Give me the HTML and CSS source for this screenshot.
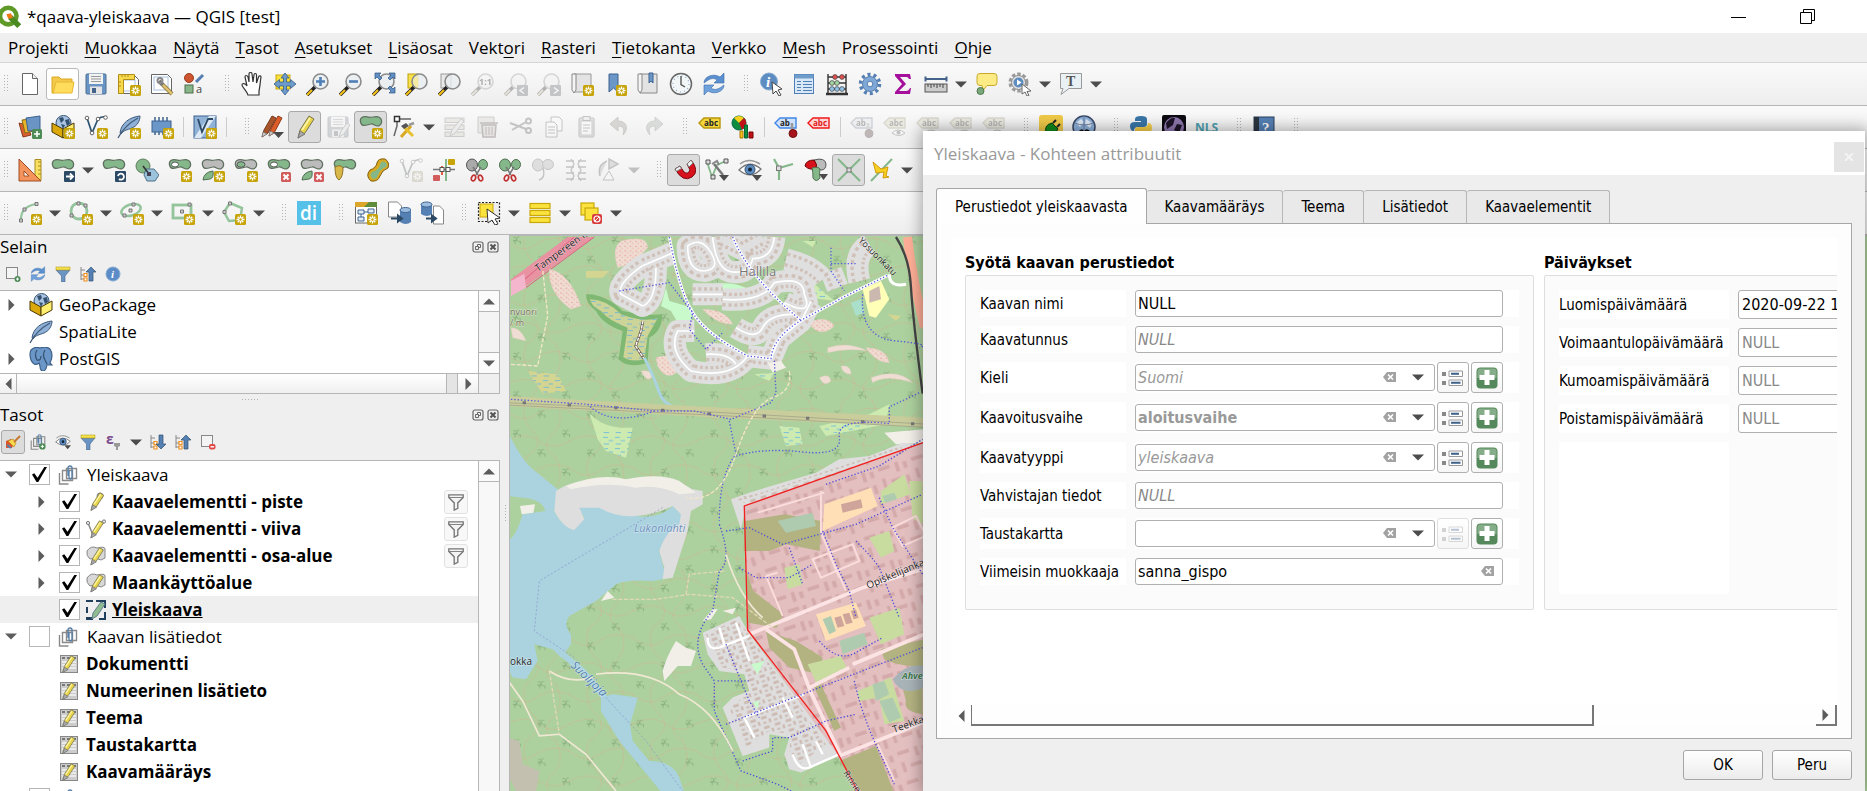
FILE: index.html
```
<!DOCTYPE html>
<html lang="fi">
<head>
<meta charset="utf-8">
<title>*qaava-yleiskaava — QGIS [test]</title>
<link rel="stylesheet" href="styles.css">
</head>
<body>
<svg class="sprite" aria-hidden="true">
<defs>
<g id="star"><rect x="13" y="13" width="11" height="11" rx="1.5" fill="#c6a40a"/><path d="M18.500 14.500v8M14.500 18.500h8M15.700 15.700l5.600 5.600M21.300 15.700l-5.600 5.600" stroke="#fff" stroke-width="1.300"/><circle cx="18.500" cy="18.500" r="1.200" fill="#c6a40a"/></g>
<g id="redx"><rect x="14" y="14" width="10" height="10" rx="1.500" fill="#d25c5c"/><path d="M16.500 16.500l5 5M21.500 16.500l-5 5" stroke="#fff" stroke-width="2"/></g>
<path id="blob" d="M1.500 7C.5 3 4 1 8 1.800 12 3.500 15 1 19 1.800 23 3 24 8 20.500 10.500 17 12.500 15 8.500 12 9 8 9.500 3 13 1.500 7z" stroke="#5f6f5f" stroke-width="1.200"/>
<g id="lens"><path d="M1 23l8-8" stroke="#222" stroke-width="3.500"/><path d="M1 23l5-5" stroke="#f5c21a" stroke-width="2.200"/><circle cx="14.500" cy="9.500" r="7.500" fill="#e9edf0" fill-opacity=".8" stroke="#8b8b8b" stroke-width="1.600"/></g>
<g id="pencil"><path d="M5 23l2-8L16 1l5 3-9 14z" fill="#e8d44a" stroke="#77744f"/><path d="M5 23l2-7 5 3z" fill="#aaa" stroke="#777"/><path d="M9 15l8-12" stroke="#fff8b0" stroke-width="1.500"/></g>
<g id="scissors"><path d="M8 9l5 8M16 9l-5 8" stroke="#777" stroke-width="1.500"/><ellipse cx="8.500" cy="20" rx="2" ry="3" transform="rotate(20 8.500 20)" fill="none" stroke="#c23030" stroke-width="1.700"/><ellipse cx="15.500" cy="20" rx="2" ry="3" transform="rotate(-20 15.500 20)" fill="none" stroke="#c23030" stroke-width="1.700"/></g>
<g id="tag"><path d="M1 8l5-5h16v10H6z" stroke-width="1.400"/></g>
</defs>
<symbol id="i-new" viewBox="0 0 24 24"><path d="M4.500 1.500h10l5 5v16h-15z" fill="#fff" stroke="#666"/><path d="M14.500 1.500v5h5" fill="#eee" stroke="#666"/></symbol>
<symbol id="i-open" viewBox="0 0 24 24"><path d="M1 5h7l2 2h11v4H6L3 21H1z" fill="#f2c94a" stroke="#dba820"/><path d="M5 10h18l-2 11H2z" fill="#ffdc5c" stroke="#e8b832"/></symbol>
<symbol id="i-save" viewBox="0 0 24 24"><rect x="2" y="2" width="20" height="20" rx="1" fill="#6a94c4" stroke="#4c6f96"/><rect x="5" y="2" width="14" height="10" fill="#f2f2f2"/><path d="M7 4.500h10M7 7h10M7 9.500h10" stroke="#999"/><rect x="6" y="14.500" width="12" height="7.500" fill="#e4e4e4"/><rect x="8" y="16" width="4" height="5" fill="#44638a"/></symbol>
<symbol id="i-layout" viewBox="0 0 24 24"><path d="M1.500 3.500h16l4 4v14h-20z" fill="#fff" stroke="#666"/><rect x="6" y="8" width="12" height="11" fill="none" stroke="#a9bfe0"/><path d="M1.500 2.500h16v5h-11v14h-5z" fill="#f8d94c" stroke="#b08e1c"/><path d="M5 3v2M8 3v2M11 3v2M2 10h2M2 14h2" stroke="#b08e1c"/><use href="#star"/></symbol>
<symbol id="i-layoutmgr" viewBox="0 0 24 24"><path d="M1.500 2.500h16l4 4v15h-20z" fill="#fff" stroke="#666"/><rect x="4" y="5" width="14" height="13" fill="none" stroke="#a9bfe0"/><path d="M9 9l4 4" stroke="#777" stroke-width="4"/><circle cx="10" cy="8.500" r="2.500" fill="none" stroke="#888" stroke-width="2"/><path d="M13 13l9 9" stroke="#8a7338" stroke-width="4"/><path d="M13 13l9 9" stroke="#dcc070" stroke-width="2.500"/></symbol>
<symbol id="i-style" viewBox="0 0 24 24"><circle cx="6" cy="6" r="4.500" fill="#cc5630" stroke="#9c3d1c"/><path d="M13 10l7-7" stroke="#557fb2" stroke-width="3"/><rect x="2" y="13" width="8" height="8" fill="#88b688" stroke="#4c6f4c"/><text x="13" y="21" font-size="11" font-family="Open Sans" fill="#444">a</text></symbol>
<symbol id="i-hand" viewBox="0 0 24 24"><path d="M8 23c-1-4-6-8-6-10s3-2 5 1L5 5c0-2 2-2 3 0l1 5V2c0-2 3-2 3 0l1 8 1-7c0-2 2.500-2 2.500 0v8l2-6c.5-2 2.500-1 2.500 0-1 6-1 10-2 14v4z" fill="#fff" stroke="#333" stroke-width="1.200"/></symbol>
<symbol id="i-pan" viewBox="0 0 24 24"><rect x="3" y="3" width="14" height="14" fill="#fbe23c" stroke="#c9a80c"/><path d="M12 1l4 5h-2.500v4h4V7.500l5.500 4.500-5.500 4.500V14h-4v4H16l-4 5-4-5h2.500v-4h-4v2.500L1 12l5.500-4.500V10h4V6H8z" fill="#6d9bcb" stroke="#355a85" stroke-width=".8"/></symbol>
<symbol id="i-zin" viewBox="0 0 24 24"><use href="#lens"/><path d="M14.500 5v9M10 9.500h9" stroke="#4f7fb5" stroke-width="2.600"/></symbol>
<symbol id="i-zout" viewBox="0 0 24 24"><use href="#lens"/><path d="M10 9.500h9" stroke="#4f7fb5" stroke-width="2.600"/></symbol>
<symbol id="i-zfull" viewBox="0 0 24 24"><use href="#lens"/><path d="M3 1h6L7 3l3 3-2 2-3-3-2 2zM23 1v6l-2-2-3 3-2-2 3-3-2-2zM23 21h-6l2-2-3-3 2-2 3 3 2-2z" fill="#5f8fc4" stroke="#2f5580" stroke-width=".7"/></symbol>
<symbol id="i-zsel" viewBox="0 0 24 24"><rect x="3" y="2" width="10" height="14" fill="#f8e14a" stroke="#bfa00c"/><use href="#lens"/><path d="M13 4.500v11a6 6 0 0 1-3-10z" fill="#f4e9a0"/></symbol>
<symbol id="i-zlay" viewBox="0 0 24 24"><rect x="3" y="2" width="10" height="14" fill="#e8e8e8" stroke="#999"/><use href="#lens"/></symbol>
<symbol id="i-znat" viewBox="0 0 24 24"><use href="#lens"/><text x="8" y="13" font-size="9" font-weight="700" font-family="Open Sans">1:1</text></symbol>
<symbol id="i-zlast" viewBox="0 0 24 24"><use href="#lens"/><rect x="13" y="13" width="11" height="11" rx="1" fill="#4b6078"/><path d="M20 15.500l-4 3 4 3" fill="none" stroke="#fff" stroke-width="1.500"/></symbol>
<symbol id="i-znext" viewBox="0 0 24 24"><use href="#lens"/><rect x="13" y="13" width="11" height="11" rx="1" fill="#4b6078"/><path d="M17 15.500l4 3-4 3" fill="none" stroke="#fff" stroke-width="1.500"/></symbol>
<symbol id="i-newmap" viewBox="0 0 24 24"><path d="M4 2h17v18H4z" fill="#e3e3e3" stroke="#999"/><path d="M2 2h4v16l-2 3-2-3z" fill="#f4f4f4" stroke="#888"/><use href="#star"/></symbol>
<symbol id="i-bookmark" viewBox="0 0 24 24"><path d="M6 2h9v18l-4.500-4L6 20z" fill="#6a96c8" stroke="#3d638f"/><use href="#star"/></symbol>
<symbol id="i-bookmarks" viewBox="0 0 24 24"><path d="M4 2h17v19H4z" fill="#e3e3e3" stroke="#888"/><path d="M2 2h4v16l-2 3-2-3z" fill="#f4f4f4" stroke="#888"/><path d="M13 1h4v10l-2-2-2 2z" fill="#6a96c8" stroke="#3d638f"/></symbol>
<symbol id="i-clock" viewBox="0 0 24 24"><circle cx="12" cy="12" r="10.500" fill="#f4f7f8" stroke="#666" stroke-width="1.500"/><circle cx="12" cy="12" r="8" fill="none" stroke="#88aacc" stroke-width="1.200" stroke-dasharray="1 3.200"/><path d="M12 4v8.500l4 2.500" fill="none" stroke="#555" stroke-width="1.400"/></symbol>
<symbol id="i-refresh" viewBox="0 0 24 24"><path d="M2 11C2 4 12 1 18 5l4-4v10H12l3-3c-4-3-8-1-13 3z" fill="#5b90d0" stroke="#3b6ca8" stroke-width=".6"/><path d="M22 13c0 7-10 10-16 6l-4 4V13h10l-3 3c4 3 8 1 13-3z" fill="#6fa1dc" stroke="#3b6ca8" stroke-width=".6"/></symbol>
<symbol id="i-identify" viewBox="0 0 24 24"><circle cx="10" cy="9.500" r="8.500" fill="#5c8cc0" stroke="#86abd2"/><text x="7" y="15" font-size="15" font-style="italic" font-weight="700" font-family="Liberation Serif" fill="#fff">i</text><path d="M13 10l10 7-4 1 3 5-2 1-3-5-3 3z" fill="#fff" stroke="#444"/></symbol>
<symbol id="i-table" viewBox="0 0 24 24"><rect x="2.500" y="2.500" width="19" height="19" fill="#d8e8f6" stroke="#4f7fb5"/><rect x="2.500" y="2.500" width="19" height="4" fill="#6e9dcc"/><path d="M5 9.500h4M11 9.500h9M5 12.500h4M11 12.500h9M5 15.500h4M11 15.500h9M5 18.500h4M11 18.500h9" stroke="#4f7fb5"/></symbol>
<symbol id="i-abacus" viewBox="0 0 24 24"><path d="M3 2v19M21 2v19M3 5h18M3 11h18M3 17h18" stroke="#333" stroke-width="1.400"/><path d="M1 22h22" stroke="#333" stroke-width="2.500"/><g stroke="#444" stroke-width=".7"><g fill="#e05050"><circle cx="10" cy="5" r="2.400"/><circle cx="17" cy="5" r="2.400"/></g><g fill="#a3d8a3"><circle cx="7" cy="11" r="2.400"/><circle cx="12" cy="11" r="2.400"/></g><g fill="#8fc4e8"><circle cx="7" cy="17" r="2.400"/><circle cx="12" cy="17" r="2.400"/><circle cx="17" cy="17" r="2.400"/></g></g></symbol>
<symbol id="i-gear" viewBox="0 0 24 24"><circle cx="12" cy="12" r="9.500" fill="none" stroke="#557fb2" stroke-width="3.500" stroke-dasharray="3 3"/><circle cx="12" cy="12" r="7.500" fill="#7fa8d6" stroke="#557fb2"/><circle cx="12" cy="12" r="2.800" fill="#f4f4f4" stroke="#557fb2"/></symbol>
<symbol id="i-sigma" viewBox="0 0 24 24"><path d="M4 2h15l1 5h-2c-1-2-2-2-4-2H9l6 7-7 7h7c2 0 3-1 4-3h1l-1 6H4v-2l7-8-7-8z" fill="#a4109c"/></symbol>
<symbol id="i-ruler" viewBox="0 0 24 24"><path d="M1 7h22M1.500 4.500v5M22.500 4.500v5" stroke="#44638a" stroke-width="2"/><rect x="1" y="12" width="22" height="8" fill="#ccc" stroke="#555"/><path d="M4 12v3M7 12v4M10 12v3M13 12v4M16 12v3M19 12v4" stroke="#444"/></symbol>
<symbol id="i-tip" viewBox="0 0 24 24"><path d="M5 1.500h14q3 0 3 3v6q0 3-3 3h-7l-4 5-1-5H5q-3 0-3-3v-6q0-3 3-3z" fill="#fdec86" stroke="#c9a92c"/><circle cx="5.500" cy="19" r="3.500" fill="#7aa87a" stroke="#4d7a4d"/></symbol>
<symbol id="i-action" viewBox="0 0 24 24"><circle cx="10.500" cy="10.500" r="8.500" fill="none" stroke="#999" stroke-width="3" stroke-dasharray="3.500 2"/><circle cx="10.500" cy="10.500" r="7" fill="#e2e2e2" stroke="#888"/><circle cx="10.500" cy="10.500" r="5" fill="#5c8cc0"/><path d="M9 7.500l4.500 3-4.500 3z" fill="#fff"/><path d="M14 12l9 7-4 .5 2 4-2 .5-2-4-3 2z" fill="#fff" stroke="#666"/></symbol>
<symbol id="i-text" viewBox="0 0 24 24"><path d="M1.500 1.500h21v15H10l-8 6 2-6H1.500z" fill="#e9f1f4" stroke="#999"/><text x="7" y="14" font-size="14" font-weight="700" font-family="Liberation Serif" fill="#555">T</text></symbol>
<symbol id="i-dsm" viewBox="0 0 24 24"><path d="M1 8l8 2 4 10-8 2z" fill="#d86030" stroke="#8a3c1a"/><path d="M4 5l9-1 3 12-9 2z" fill="#e8b42a" stroke="#8a6a10"/><path d="M8 3l14-2v14l-12 1z" fill="#6a94c4" stroke="#3d638f"/><rect x="14" y="14" width="10" height="10" rx="1.500" fill="#4d8c57"/><path d="M19 16v6M16 19h6" stroke="#fff" stroke-width="1.600"/></symbol>
<symbol id="i-gpkg" viewBox="0 0 24 24"><circle cx="12.500" cy="8" r="7.500" fill="#a8c4e2" stroke="#34506f"/><path d="M8 3l4-1 1 3-3 3zM14 5l4-1 1 5-3 2zM10 9l4 1-2 4z" fill="#34506f"/><path d="M1 8l11 6v9L1 17z" fill="#dca90c" stroke="#4a3a04"/><path d="M23 8l-11 6v9l11-6z" fill="#ffee70" stroke="#4a3a04"/></symbol>
<symbol id="i-gpkgnew" viewBox="0 0 24 24"><use href="#i-gpkg"/><use href="#star"/></symbol>
<symbol id="i-vnode" viewBox="0 0 24 24"><path d="M3 3l5 15L14 4q4-3 8-2" fill="none" stroke="#2c5470" stroke-width="1.700"/><g fill="#fff" stroke="#555" stroke-width=".9"><circle cx="3" cy="3" r="1.800"/><circle cx="14" cy="4" r="1.800"/><circle cx="21.500" cy="2.500" r="1.800"/><circle cx="8" cy="18" r="1.800"/></g></symbol>
<symbol id="i-vnew" viewBox="0 0 24 24"><use href="#i-vnode"/><use href="#star"/></symbol>
<symbol id="i-feather" viewBox="0 0 24 24"><path d="M3 18C4 8 13 2 23 1c0 5-3 10-8 12s-8 2-11 6z" fill="#8fb0d6" stroke="#3d5878"/><path d="M1 23C5 15 12 8 21 3" fill="none" stroke="#3d5878" stroke-width="1.200"/></symbol>
<symbol id="i-feathernew" viewBox="0 0 24 24"><use href="#i-feather"/><use href="#star"/></symbol>
<symbol id="i-chip" viewBox="0 0 24 24"><path d="M5 2v18M9 2v18M13 2v18M17 2v18" stroke="#3d638f" stroke-width="1.500"/><rect x="2" y="6" width="19" height="11" fill="#6a96c8" stroke="#3d638f"/><use href="#star"/></symbol>
<symbol id="i-vbox" viewBox="0 0 24 24"><rect x="1" y="1" width="22" height="22" fill="#8fb2d6" stroke="#3d638f"/><path d="M1 23L16 1h7L8 23z" fill="#dce8f3"/><path d="M5 4l4 13L15 4h5" fill="none" stroke="#2c4a66" stroke-width="1.800"/><use href="#star"/></symbol>
<symbol id="i-pencils" viewBox="0 0 24 24"><path d="M2 22l2-7L12 1l4 2-8 15z" fill="#a8542a" stroke="#73391a"/><path d="M9 21l2-7L18 1l4 2-8 15z" fill="#de5c28" stroke="#8f3a18"/><path d="M2 22l1-5 4 2zM9 21l1-5 4 2z" fill="#ccc" stroke="#777" stroke-width=".7"/><path d="M13 17h11l-5.500 6z" fill="#4a4a4a"/></symbol>
<symbol id="i-pencil" viewBox="0 0 24 24"><use href="#pencil"/></symbol>
<symbol id="i-saveedit" viewBox="0 0 24 24"><use href="#i-save"/><path d="M13 22l2-6 6-8 3 2-6 9z" fill="#ddd" stroke="#777"/></symbol>
<symbol id="i-addpoly" viewBox="0 0 24 24"><use href="#blob" fill="#84b88a"/><use href="#star"/></symbol>
<symbol id="i-nodetool" viewBox="0 0 24 24"><path d="M5 4v7L2 21M5 4h14" stroke="#666" stroke-width="1.500" fill="none"/><rect x="2.500" y="1.500" width="5" height="5" fill="#fff" stroke="#333" stroke-width="1.500"/><path d="M9 22l10-11" stroke="#d8a820" stroke-width="3"/><path d="M12 12l9 9" stroke="#e8c030" stroke-width="3"/><path d="M9 11l5-3 3 3-5 3z" fill="#555"/><path d="M17 10l5-2" stroke="#999" stroke-width="2.500"/></symbol>
<symbol id="i-multi" viewBox="0 0 24 24"><rect x="2" y="3" width="19" height="4.500" fill="#d8cf90" stroke="#777"/><rect x="2" y="10" width="19" height="4.500" fill="#d8cf90" stroke="#777"/><rect x="2" y="17" width="19" height="4.500" fill="#d8cf90" stroke="#777"/><path d="M7 21l2-6 9-11 3 2-9 12z" fill="#ddd" stroke="#777"/></symbol>
<symbol id="i-trash" viewBox="0 0 24 24"><path d="M2 2h16v16H2z" fill="#d8cf90" stroke="#777"/><path d="M4 8h18M6 10h14l-1 12H7z" fill="#e6b8b0" stroke="#833" stroke-width="1.500"/><path d="M10 12v8M13 12v8M16 12v8" stroke="#833"/></symbol>
<symbol id="i-cut" viewBox="0 0 24 24"><path d="M1 8l16 6M3 15L17 7" stroke="#555" stroke-width="2"/><circle cx="19.500" cy="6" r="2.500" fill="none" stroke="#555" stroke-width="2"/><circle cx="19.500" cy="15.500" r="2.500" fill="none" stroke="#555" stroke-width="2"/></symbol>
<symbol id="i-copy" viewBox="0 0 24 24"><path d="M9 2h8l3 3v11H9z" fill="#fff" stroke="#555"/><path d="M4 7h8l3 3v12H4z" fill="#fff" stroke="#555"/><path d="M6 12h7M6 15h7M6 18h7" stroke="#555"/></symbol>
<symbol id="i-paste" viewBox="0 0 24 24"><rect x="4" y="3" width="15" height="19" rx="1" fill="#bbb" stroke="#555"/><rect x="6" y="6" width="11" height="14" fill="#fff" stroke="#777"/><rect x="8" y="1.500" width="7" height="4" fill="#ddd" stroke="#555"/><path d="M8 10h7M8 13h7M8 16h5" stroke="#555"/></symbol>
<symbol id="i-undo" viewBox="0 0 24 24"><path d="M2 9l8-7v4c9 0 11 8 5 14 2-6 0-9-5-9v5z" fill="#b08a5c" stroke="#8a6a40"/></symbol>
<symbol id="i-redo" viewBox="0 0 24 24"><path d="M22 9l-8-7v4c-9 0-11 8-5 14-2-6 0-9 5-9v5z" fill="#8aa890" stroke="#6a8870"/></symbol>
<symbol id="i-abc" viewBox="0 0 24 24"><use href="#tag" fill="#f4d63c" stroke="#b8960c"/><text x="6" y="11" font-size="8" font-weight="700" font-family="Open Sans" fill="#222">abc</text></symbol>
<symbol id="i-abcblue" viewBox="0 0 24 24"><use href="#tag" fill="#cfe2fb" stroke="#3f86e8"/><text x="6" y="11" font-size="8" font-weight="700" font-family="Open Sans" fill="#222">ab</text><path d="M18 8v8" stroke="#999" stroke-width="2.500"/><circle cx="19" cy="18.500" r="4" fill="#a8141c" stroke="#701014"/></symbol>
<symbol id="i-abcred" viewBox="0 0 24 24"><use href="#tag" fill="#ffd6d6" stroke="#f01818"/><text x="6" y="11" font-size="8" font-weight="700" font-family="Open Sans" fill="#e01818">abc</text></symbol>
<symbol id="i-abceye" viewBox="0 0 24 24"><use href="#i-abc"/><path d="M9 18q6-6 13 0-6 5-13 0z" fill="#fff" stroke="#555"/><circle cx="15.500" cy="17.500" r="2" fill="#555"/></symbol>
<symbol id="i-diagram" viewBox="0 0 24 24"><circle cx="8" cy="8" r="7" fill="#108c40" stroke="#064"/><path d="M8 8L3 3a7 7 0 0 1 10 0z" fill="#f8d020"/><path d="M8 8l5-5a7 7 0 0 1-2 11.500z" fill="#c01018"/><path d="M9 16h3v7H9z" fill="#f8c020" stroke="#a70"/><path d="M13.500 10h3v13h-3z" fill="#108c40" stroke="#063"/><path d="M18 17h4v6h-4z" fill="#c01018" stroke="#700"/></symbol>
<symbol id="i-plug" viewBox="0 0 24 24"><rect width="24" height="24" rx="3" fill="#efc948"/><path d="M7 17q-2-7 6-9l6 6q-3 6-10 6z" fill="#118a1c" stroke="#063c0a"/><path d="M14 8l3-3M18 12l3-3M7 18l-4 4" stroke="#222" stroke-width="2"/></symbol>
<symbol id="i-globe" viewBox="0 0 24 24"><circle cx="12" cy="12" r="11" fill="#8fb2dc" stroke="#3a4a66" stroke-width="1.500"/><path d="M4 8l5-4 3 3-4 5zM14 4l6 4-2 5-5-4z" fill="#dfe9f5"/><path d="M3 8q9 4 18 0M12 1v14" stroke="#6a7fa0" fill="none"/><path d="M6 17q4-5 6-1 3-4 7 1-4 4-7 0-3 4-6 0z" fill="#111"/></symbol>
<symbol id="i-python" viewBox="0 0 24 24"><path d="M6 7V4q0-3 6-3t6 3v5q0 3-3 3H9q-4 0-4 4-4 0-4-5 0-4 5-4h6V6H6z" fill="#3a76a8"/><path d="M18 16v4q0 3-6 3t-6-3v-5q0-3 3-3h6q4 0 4-4 4 0 4 5t-5 4z" fill="#f8cf48"/></symbol>
<symbol id="i-dark" viewBox="0 0 24 24"><rect width="24" height="24" rx="2" fill="#0d0a12"/><circle cx="12" cy="12" r="10" fill="#8d76ad"/><path d="M4 8q5-6 9-5l-2 7-6 4zM15 9l5 1-3 8-5-3z" fill="#1d1428"/></symbol>
<symbol id="i-help" viewBox="0 0 24 24"><rect x="2" y="2" width="20" height="22" fill="#5580b4" stroke="#2a3f5a"/><rect x="2" y="2" width="5" height="22" fill="#2a3440"/><text x="10" y="18" font-size="15" font-weight="700" font-family="Liberation Serif" fill="#fff">?</text></symbol>
<symbol id="i-triangle" viewBox="0 0 24 24"><path d="M17 1.500h6v21h-6z" fill="#f8e060" stroke="#a88c20"/><path d="M20 4h3M20 8h3M20 12h3M20 16h3" stroke="#a88c20"/><path d="M1 1l22 22H1z" fill="#f4935c" stroke="#a04c20"/><path d="M6 13l5 5H6z" fill="#fff" stroke="#a04c20"/></symbol>
<symbol id="i-move" viewBox="0 0 24 24"><use href="#blob" fill="#84b88a"/><rect x="13" y="13" width="11" height="11" rx="1" fill="#2c4a66"/><path d="M15 18.500h6M19 15.500l3 3-3 3" stroke="#fff" stroke-width="1.800" fill="none"/></symbol>
<symbol id="i-rotate" viewBox="0 0 24 24"><use href="#blob" fill="#84b88a"/><rect x="13" y="13" width="11" height="11" rx="1" fill="#2c4a66"/><path d="M17 21a3 3 0 1 0-1-3" stroke="#fff" stroke-width="1.800" fill="none"/></symbol>
<symbol id="i-simplify" viewBox="0 0 24 24"><circle cx="8" cy="8" r="7" fill="#84b88a" stroke="#5f7f5f"/><path d="M11 11h8l5 6-4 6h-8l-3-6z" fill="#9bc4dc" stroke="#4c7088"/><path d="M8 8l6 8" stroke="#333" stroke-width="1.500"/><path d="M12 14h4v4h-4z" fill="#445"/></symbol>
<symbol id="i-ring" viewBox="0 0 24 24"><use href="#blob" fill="#84b88a"/><ellipse cx="7" cy="6.500" rx="3.500" ry="2.500" fill="#fff" stroke="#555"/><use href="#star"/></symbol>
<symbol id="i-part" viewBox="0 0 24 24"><use href="#blob" fill="#bbb"/><path d="M2 22q1-8 10-9 1 7-3 8z" fill="#84b88a" stroke="#4f6f4f"/><use href="#star"/></symbol>
<symbol id="i-fillring" viewBox="0 0 24 24"><use href="#blob" fill="#bbb"/><ellipse cx="7" cy="6.500" rx="4" ry="2.800" fill="#84b88a" stroke="#555"/><use href="#star"/></symbol>
<symbol id="i-delring" viewBox="0 0 24 24"><use href="#blob" fill="#84b88a"/><ellipse cx="7" cy="6.500" rx="3.500" ry="2.500" fill="#fff" stroke="#555"/><use href="#redx"/></symbol>
<symbol id="i-delpart" viewBox="0 0 24 24"><use href="#blob" fill="#bbb"/><path d="M2 22q1-8 10-9 1 7-3 8z" fill="#84b88a" stroke="#4f6f4f"/><use href="#redx"/></symbol>
<symbol id="i-reshape" viewBox="0 0 24 24"><use href="#blob" fill="#84b88a"/><path d="M2 9q6-3 8 1 0 9-4 12Q2 20 2 9z" fill="#d8b84a" stroke="#907020"/></symbol>
<symbol id="i-offset" viewBox="0 0 24 24"><path d="M4 12Q10 10 11 5t8-4q5 3 3 9-6 2-8 8t-9 5q-6-5-1-11z" fill="#d8a820" stroke="#806010"/><path d="M6 14q7-2 8-7t5-3q3 2 1 5-6 2-8 8t-6 3q-3-3 0-6z" fill="#84b88a"/></symbol>
<symbol id="i-split" viewBox="0 0 24 24"><ellipse cx="7" cy="7" rx="5.500" ry="6" fill="#aaa" stroke="#555"/><ellipse cx="18" cy="6.500" rx="4.500" ry="5" fill="#84b88a" stroke="#4f6f4f"/><use href="#scissors"/></symbol>
<symbol id="i-splitg" viewBox="0 0 24 24"><ellipse cx="7" cy="7" rx="5.500" ry="6" fill="#84b88a" stroke="#4f6f4f"/><ellipse cx="18" cy="6.500" rx="4.500" ry="5" fill="#84b88a" stroke="#4f6f4f"/><use href="#scissors"/></symbol>
<symbol id="i-trim" viewBox="0 0 24 24"><path d="M14 1v22" stroke="#84b88a" stroke-width="2"/><path d="M1 11.500h22" stroke="#777" stroke-width="1.500"/><path d="M10 8v9" stroke="#e06040" stroke-width="2"/><rect x="8" y="9.500" width="4" height="4" fill="#fff" stroke="#555"/><rect x="14" y="9.500" width="4" height="4" fill="#fff" stroke="#555"/><rect x="1" y="17" width="7" height="6" rx="1" fill="#d25c5c"/><rect x="16" y="1" width="7" height="6" rx="1" fill="#c6a40a"/></symbol>
<symbol id="i-merge" viewBox="0 0 24 24"><ellipse cx="7" cy="7" rx="5.500" ry="6" fill="#aaa" stroke="#555"/><ellipse cx="17" cy="6.500" rx="5.500" ry="5" fill="#aaa" stroke="#555"/><path d="M12 10q3 10-4 12" fill="none" stroke="#555" stroke-width="1.500"/></symbol>
<symbol id="i-mergeattr" viewBox="0 0 24 24"><path d="M2 3h8M14 3h8M2 9h8M14 9h8M2 15h8M14 15h8M2 21h8M14 21h8M7 1l3 5-3 6 3 6-3 5M17 1l-3 5 3 6-3 6 3 5" fill="none" stroke="#555" stroke-width="1.300"/></symbol>
<symbol id="i-rotsym" viewBox="0 0 24 24"><path d="M10 3q-10 4-7 15M12 1v10l9-5z" fill="#aaa" stroke="#555" stroke-width="1.500"/><path d="M6 22l6-9 5 9z" fill="#fff" stroke="#555"/></symbol>
<symbol id="i-magnet" viewBox="0 0 24 24"><path d="M3 11l5-3 4 6q4 3 6-2L15 6l4-4q9 11 1 17-9 6-17-8z" fill="#d8121c" stroke="#7a0a10"/><path d="M3 11l5-3 1.500 2.500-5 3zM15 6l4-4 2 3-4 4z" fill="#eee" stroke="#777"/></symbol>
<symbol id="i-snapcfg" viewBox="0 0 24 24"><path d="M2 4l5 15L12 7l9-4" fill="none" stroke="#84b88a" stroke-width="1.800"/><path d="M1 2h4v4H1zM19 1h4v4h-4zM6 17h4v4H6z" fill="#ddd" stroke="#555"/><path d="M9 6l9 11" stroke="#777" stroke-width="2.500"/><path d="M7 6l5-3 2 4" fill="none" stroke="#888" stroke-width="2"/><path d="M14 17h10l-5 6z" fill="#4a4a4a"/></symbol>
<symbol id="i-eye" viewBox="0 0 24 24"><path d="M1 12Q11 1 23 11 13 22 1 12z" fill="#fff" stroke="#777" stroke-width="1.300"/><circle cx="12" cy="11.500" r="5" fill="#5c8cc0" stroke="#34506f"/><circle cx="12" cy="11.500" r="2" fill="#123"/><path d="M2 6Q11-1 22 6" fill="none" stroke="#999" stroke-width="1.500"/><path d="M14 17h10l-5 6z" fill="#4a4a4a"/></symbol>
<symbol id="i-topo" viewBox="0 0 24 24"><path d="M3 1l5 9 14-4M8 10v12" stroke="#84b88a" stroke-width="2.200" fill="none"/><rect x="5.500" y="8" width="4.500" height="4.500" fill="#ddd" stroke="#777"/></symbol>
<symbol id="i-overlap" viewBox="0 0 24 24"><path d="M10 2q11-3 12 4 0 6-5 6-6-1-8-5z" fill="#bbb" stroke="#555"/><path d="M1 8q1-6 9-6 4 5 2 8-6 3-11-2z" fill="#d8121c" stroke="#600"/><path d="M8 10q6-2 8 1-1 5 0 9-4 5-7 0 0-6-1-10z" fill="#84b88a" stroke="#4f6f4f"/><path d="M15 16h9l-4.500 6z" fill="#4a4a4a"/></symbol>
<symbol id="i-cross" viewBox="0 0 24 24"><path d="M1 1l22 22M23 1L1 23" stroke="#84b88a" stroke-width="2"/><rect x="10" y="10" width="4" height="4" fill="#ddd" stroke="#777"/></symbol>
<symbol id="i-trace" viewBox="0 0 24 24"><path d="M22 1L1 23" stroke="#84b88a" stroke-width="2"/><path d="M3 4l8 7 7-2-2 9 3 1-6 1 1-6-8 1z" fill="#f8d020" stroke="#d09a10"/></symbol>
<symbol id="i-arc" viewBox="0 0 24 24"><path d="M3 20Q2 6 18 3" fill="none" stroke="#93c49b" stroke-width="2.200"/><path d="M1.500 18h3v3h-3zM5 7h3v3H5zM17 1.500h3v3h-3z" fill="#ccc" stroke="#777"/><use href="#star"/></symbol>
<symbol id="i-circle" viewBox="0 0 24 24"><circle cx="10" cy="10" r="8" fill="none" stroke="#93c49b" stroke-width="2.800"/><path d="M8 1h3v3H8zM1 13h3v3H1zM15 3h3v3h-3z" fill="#ccc" stroke="#777"/><use href="#star"/></symbol>
<symbol id="i-ellipse" viewBox="0 0 24 24"><ellipse cx="11" cy="9" rx="10" ry="5.500" transform="rotate(-18 11 9)" fill="none" stroke="#93c49b" stroke-width="2.500"/><path d="M9 8h3v3H9zM12 2h3v3h-3zM3 13h3v3H3z" fill="#ccc" stroke="#777"/><use href="#star"/></symbol>
<symbol id="i-rect" viewBox="0 0 24 24"><rect x="2" y="4" width="18" height="13" fill="none" stroke="#93c49b" stroke-width="2.800"/><path d="M9.500 9h3v3h-3zM17 2h3v3h-3z" fill="#ccc" stroke="#777"/><use href="#star"/></symbol>
<symbol id="i-polygon" viewBox="0 0 24 24"><path d="M8 2l12 5-2 12-11 1-5-9z" fill="none" stroke="#93c49b" stroke-width="2.500"/><path d="M6.500 1h3v3h-3zM1 9.500h3v3H1z" fill="#ccc" stroke="#777"/><use href="#star"/></symbol>
<symbol id="i-di" viewBox="0 0 24 24"><rect width="24" height="24" fill="#55c0e8"/><text x="3" y="19" font-size="19" font-family="Open Sans" font-weight="600" fill="#fff">di</text></symbol>
<symbol id="i-form" viewBox="0 0 24 24"><rect x="1.500" y="2" width="21" height="20" fill="#fff" stroke="#666"/><path d="M1 1h22v5H1z" fill="#5f8c3c"/><path d="M1 1h14l-5 5H1z" fill="#dba62a"/><path d="M4 9h6v4H4zM14 8h6v4h-6zM4 16h6v4H4z" fill="#e3ecf4" stroke="#3d638f"/><path d="M10 11h4M7 13v3" stroke="#3d638f"/><use href="#star"/></symbol>
<symbol id="i-todb" viewBox="0 0 24 24"><path d="M1.500 1h9l4 4v11h-13z" fill="#fff" stroke="#888"/><path d="M13 9h11v12q-5 4-11 0z" fill="#5580b4"/><ellipse cx="18.500" cy="9" rx="5.500" ry="2.500" fill="#9cbde0" stroke="#3d638f"/><path d="M4 17.500h7M11 14.500l4 3-4 3z" fill="#2c4a66" stroke="#2c4a66" stroke-width="2"/></symbol>
<symbol id="i-fromdb" viewBox="0 0 24 24"><path d="M1 3h11v10q-5 4-11 0z" fill="#5580b4"/><ellipse cx="6.500" cy="3.500" rx="5.500" ry="2.500" fill="#9cbde0" stroke="#3d638f"/><path d="M13.500 5h6l4 4v14h-10z" fill="#fff" stroke="#888"/><path d="M6 17.500h6M12 14.500l4 3-4 3z" fill="#2c4a66" stroke="#2c4a66" stroke-width="2"/></symbol>
<symbol id="i-select" viewBox="0 0 24 24"><rect x="1.500" y="1.500" width="21" height="19" fill="#eee" stroke="#222" stroke-width="1.200" stroke-dasharray="2 1.500"/><rect x="3" y="3" width="13" height="13" fill="#fbe23c" stroke="#c9a80c"/><path d="M10 8l13 9-5 1 3 5-3 1-3-5-4 3z" fill="#fff" stroke="#333"/></symbol>
<symbol id="i-selattr" viewBox="0 0 24 24"><g fill="#fbe23c" stroke="#c9a80c" stroke-width="1.200"><rect x="2" y="2.500" width="20" height="5"/><rect x="2" y="9.500" width="20" height="5"/><rect x="2" y="16.500" width="20" height="5"/></g></symbol>
<symbol id="i-desel" viewBox="0 0 24 24"><g fill="#fbe23c" stroke="#c9a80c" stroke-width="1.200"><rect x="2" y="2" width="13" height="12"/><rect x="6" y="7" width="13" height="12"/></g><rect x="13" y="13" width="10" height="10" rx="2" fill="#d83c3c"/><circle cx="18" cy="18" r="3" fill="none" stroke="#fff" stroke-width="1.200"/><path d="M16 20l4-4" stroke="#fff"/></symbol>
<symbol id="i-addl" viewBox="0 0 16 16"><rect x="1.500" y="1.500" width="11" height="11" fill="#f4f4f4" stroke="#888"/><circle cx="12.500" cy="13" r="3" fill="#4d8c57"/><path d="M12.500 11.500v3M11 13h3" stroke="#fff"/></symbol>
<symbol id="i-reml" viewBox="0 0 16 16"><rect x="1.500" y="1.500" width="11" height="11" fill="#f4f4f4" stroke="#888"/><rect x="9" y="10" width="6.500" height="5.500" rx="2" fill="#e04848"/><path d="M10.500 12.800h3.500" stroke="#fff" stroke-width="1.400"/></symbol>
<symbol id="i-funnel" viewBox="0 0 16 16"><path d="M1 4h14l-5 6v6H6.500v-6z" fill="#6a94c4" stroke="#44638a" stroke-width=".6"/><rect x="1" y="1" width="14" height="3" fill="#f4e04c" stroke="#b8a020" stroke-width=".6"/></symbol>
<symbol id="i-collapse" viewBox="0 0 16 16"><path d="M1 1v13M1 4h4M1 9h4M1 13h4" stroke="#888"/><path d="M4 7.500h3v3H4zM4 12h3v3H4z" fill="#fff" stroke="#f09020" stroke-width="1.200"/><path d="M11 1l5 5h-3v9H9V6H6z" fill="#5580b4" stroke="#34506f" stroke-width=".7"/></symbol>
<symbol id="i-expand" viewBox="0 0 16 16"><path d="M1 1v13M1 4h4M1 9h4M1 13h4" stroke="#888"/><path d="M4 7.500h3v3H4zM4 12h3v3H4z" fill="#fff" stroke="#f09020" stroke-width="1.200"/><path d="M11 15l5-5h-3V1H9v9H6z" fill="#5580b4" stroke="#34506f" stroke-width=".7"/></symbol>
<symbol id="i-info" viewBox="0 0 16 16"><circle cx="8" cy="8" r="7" fill="#5c8cc8" stroke="#86abd2"/><text x="6" y="12" font-size="11" font-style="italic" font-weight="700" font-family="Liberation Serif" fill="#fff">i</text></symbol>
<symbol id="i-brush" viewBox="0 0 16 16"><path d="M1 7l5-2 3 4-2 5-6 0z" fill="#d8562a"/><path d="M3 7l6 6 2-4-3-4z" fill="#f8d84c" stroke="#b08020" stroke-width=".6"/><path d="M9 8l6-6" stroke="#c87830" stroke-width="2"/><path d="M2 11l4 3" stroke="#5580b4" stroke-width="2"/></symbol>
<symbol id="i-group" viewBox="0 0 20 20"><path d="M1.500 8v11h9M4.500 5.500h10v10h-10zM8.500 3.500h10v10h-10z" fill="none" stroke="#8a8a8a" stroke-width="1.400"/><path d="M10 11V3q0-2 2-2t2 2v9q0 2-1.500 2T11 12V5" fill="none" stroke="#557fa8" stroke-width="1.300"/></symbol>
<symbol id="i-addgroup" viewBox="0 0 20 20"><use href="#i-group"/><circle cx="15.500" cy="15.500" r="4" fill="#4d8c57"/><path d="M15.500 13.500v4M13.500 15.500h4" stroke="#fff" stroke-width="1.200"/></symbol>
<symbol id="i-eps" viewBox="0 0 16 16"><text x="1" y="10" font-size="14" font-weight="700" font-family="Open Sans" fill="#7a4a8c">ε</text><path d="M9 9h6v3l-2 1v3h-2v-3l-2-1z" fill="#999"/></symbol>
<symbol id="i-elephant" viewBox="0 0 24 24"><path d="M2 3q4-4 9-2 6-2 10 1 4 6 0 14l2 2-5 0q-1 6-4 6-3 0-3-5l-1-3q-5 4-8-3Q0 7 2 3z" fill="#6a96c8" stroke="#3d5f88" stroke-width="1.200"/><path d="M8 3q-3 5 0 10 4 1 4-4M16 3q-3 5 0 10l2 4" fill="none" stroke="#34506f" stroke-width="1.200"/></symbol>
<symbol id="i-point" viewBox="0 0 20 20"><circle cx="14" cy="4" r="3" fill="#ccc" stroke="#888"/><g transform="translate(1 0) scale(.8)"><use href="#pencil"/></g></symbol>
<symbol id="i-line" viewBox="0 0 20 20"><path d="M2 4l5 12L13 4l6-2" fill="none" stroke="#888" stroke-width="1.500"/><circle cx="2" cy="4" r="1.600" fill="#eee" stroke="#777"/><circle cx="18" cy="2.500" r="1.600" fill="#eee" stroke="#777"/><g transform="translate(1 1) scale(.78)"><use href="#pencil"/></g></symbol>
<symbol id="i-poly" viewBox="0 0 20 20"><path d="M1 5q4-6 10-3 8-2 8 1v9l-4 2-6-2-5 1q-4-3-3-8z" fill="#d8d8d8" stroke="#888"/><g transform="translate(1 1) scale(.78)"><use href="#pencil"/></g></symbol>
<symbol id="i-polysel" viewBox="0 0 20 20"><path d="M0 0h7v2H0zM10 0h10v8h-2V2h-8zM0 7h2v6H0zM0 17h7v3H0zM13 18h5v-6h2v8h-7z" fill="#1f3f5c"/><path d="M6 19l1-6 8-11 4 2-8 12z" fill="#8fbd8f" stroke="#5f7f8f"/></symbol>
<symbol id="i-tbl" viewBox="0 0 20 20"><rect x="1.500" y="1.500" width="17" height="17" fill="#ccc" stroke="#888"/><path d="M3 4h3M8 4h9" stroke="#777" stroke-width="2"/><path d="M3 8h14M3 11h14M3 14h14" stroke="#f4f4f4" stroke-width="1.500"/><g transform="translate(0 1) scale(.76)"><use href="#pencil"/></g></symbol>
<symbol id="i-filter" viewBox="0 0 20 20"><path d="M2 2h16v3l-6 6v6l-4 2v-8L2 5z" fill="#f4f4f4" stroke="#777" stroke-width="1.500"/><path d="M2 5h16" stroke="#777"/></symbol>
<symbol id="i-down" viewBox="0 0 12 7"><path d="M0 .5h12L6 6.500z"/></symbol>
<symbol id="i-right" viewBox="0 0 7 12"><path d="M.5 0v12l6-6z"/></symbol>
<symbol id="i-float" viewBox="0 0 12 12"><rect x="1" y="1" width="10" height="10" rx="2" fill="none" stroke="#666" stroke-width="1.200"/><path d="M3.500 5.500h3v3h-3zM5.500 5.500v-2h3v3h-2" fill="none" stroke="#666"/></symbol>
<symbol id="i-close" viewBox="0 0 12 12"><rect x="1" y="1" width="10" height="10" rx="2" fill="none" stroke="#666" stroke-width="1.200"/><path d="M3.500 3.500l5 5M8.500 3.500l-5 5" stroke="#555" stroke-width="2"/></symbol>
<symbol id="i-clear" viewBox="0 0 13 12"><path d="M0 6l4-5h9v10H4z" fill="#a2a2a2"/><path d="M5 3.500l5 5M10 3.500l-5 5" stroke="#fff" stroke-width="1.600"/></symbol>
<symbol id="i-formview" viewBox="0 0 22 20"><path d="M0 4h4v4H0zM0 13h4v4H0z" fill="#888"/><path d="M7 3h13.500v5.500H7zM7 12h13.500v5.500H7z" fill="#fff" stroke="#999"/><path d="M9 5.800h8M9 14.800h9.500" stroke="#3d5f88" stroke-width="2"/></symbol>
<symbol id="i-plus" viewBox="0 0 22 22"><rect x=".5" y=".5" width="21" height="21" rx="4" fill="#55885a"/><path d="M4 1.500h14q2.500 0 2.500 3V11h-19V4.500q0-3 2.500-3z" fill="#86ad89"/><path d="M11 3v15M3.500 10.500h15" stroke="#fff" stroke-width="5"/></symbol>
</svg>

<div class="app">
<header class="titlebar">
  <svg class="logo" viewBox="0 0 24 24"><circle cx="9" cy="11" r="9" fill="none" stroke="#5f9a28" stroke-width="5"/><path d="M11 12l10 10" stroke="#4a8a20" stroke-width="6"/><path d="M7 9l5-1 2 5-5 1z" fill="#ee7913"/></svg>
  <h1>*qaava-yleiskaava — QGIS [test]</h1>
  <button class="winbtn" aria-label="Pienennä"><svg width="16" height="16"><path d="M0 8.500h15" stroke="#000"/></svg></button>
  <button class="winbtn" aria-label="Palauta"><svg width="16" height="16" fill="none" stroke="#000"><path d="M.5 3.500h11v11H.5zM3.500 3.500v-3h11v11h-3"/></svg></button>
</header>
<nav class="menubar">
  <button>Projekti</button><button><u>M</u>uokkaa</button><button><u>N</u>äytä</button><button><u>T</u>asot</button><button><u>A</u>setukset</button><button><u>L</u>isäosat</button><button>Vekt<u>o</u>ri</button><button><u>R</u>asteri</button><button><u>T</u>ietokanta</button><button><u>V</u>erkko</button><button><u>M</u>esh</button><button>Prosessointi</button><button><u>O</u>hje</button>
</nav>

<div class="toolbar">
  <i class="grip first"></i>
  <button class="tb" aria-label="Uusi"><svg><use href="#i-new"/></svg></button>
  <button class="tb raised" aria-label="Avaa"><svg><use href="#i-open"/></svg></button>
  <button class="tb" aria-label="Tallenna"><svg><use href="#i-save"/></svg></button>
  <button class="tb" aria-label="Uusi taitto"><svg><use href="#i-layout"/></svg></button>
  <button class="tb" aria-label="Taittojen hallinta"><svg><use href="#i-layoutmgr"/></svg></button>
  <button class="tb" aria-label="Tyylit"><svg><use href="#i-style"/></svg></button>
  <i class="grip"></i>
  <button class="tb" aria-label="Siirrä"><svg><use href="#i-hand"/></svg></button>
  <button class="tb" aria-label="Siirrä valintaan"><svg><use href="#i-pan"/></svg></button>
  <button class="tb" aria-label="Lähennä"><svg><use href="#i-zin"/></svg></button>
  <button class="tb" aria-label="Loitonna"><svg><use href="#i-zout"/></svg></button>
  <button class="tb" aria-label="Koko laajuus"><svg><use href="#i-zfull"/></svg></button>
  <button class="tb" aria-label="Lähennä valintaan"><svg><use href="#i-zsel"/></svg></button>
  <button class="tb" aria-label="Lähennä tasoon"><svg><use href="#i-zlay"/></svg></button>
  <button class="tb" disabled aria-label="Alkuperäinen koko"><svg><use href="#i-znat"/></svg></button>
  <button class="tb" disabled aria-label="Edellinen"><svg><use href="#i-zlast"/></svg></button>
  <button class="tb" disabled aria-label="Seuraava"><svg><use href="#i-znext"/></svg></button>
  <button class="tb" aria-label="Uusi karttanäkymä"><svg><use href="#i-newmap"/></svg></button>
  <button class="tb" aria-label="Uusi kirjanmerkki"><svg><use href="#i-bookmark"/></svg></button>
  <button class="tb" aria-label="Kirjanmerkit"><svg><use href="#i-bookmarks"/></svg></button>
  <button class="tb" aria-label="Aikahallinta"><svg><use href="#i-clock"/></svg></button>
  <button class="tb" aria-label="Päivitä"><svg><use href="#i-refresh"/></svg></button>
  <i class="grip"></i>
  <button class="tb" aria-label="Tunnista"><svg><use href="#i-identify"/></svg></button>
  <button class="tb" aria-label="Attribuuttitaulu"><svg><use href="#i-table"/></svg></button>
  <button class="tb" aria-label="Laskin"><svg><use href="#i-abacus"/></svg></button>
  <button class="tb" aria-label="Työkalut"><svg><use href="#i-gear"/></svg></button>
  <button class="tb" aria-label="Tilastot"><svg><use href="#i-sigma"/></svg></button>
  <button class="tb" aria-label="Mittaa"><svg><use href="#i-ruler"/></svg></button>
  <button class="dd" aria-label="Lisää"><svg><use href="#i-down"/></svg></button>
  <button class="tb" aria-label="Karttavihje"><svg><use href="#i-tip"/></svg></button>
  <button class="tb" aria-label="Toiminto"><svg><use href="#i-action"/></svg></button>
  <button class="dd" aria-label="Lisää"><svg><use href="#i-down"/></svg></button>
  <button class="tb" aria-label="Teksti"><svg><use href="#i-text"/></svg></button>
  <button class="dd" aria-label="Lisää"><svg><use href="#i-down"/></svg></button>
</div>

<div class="toolbar">
  <i class="grip first"></i>
  <button class="tb" aria-label="Tietolähteet"><svg><use href="#i-dsm"/></svg></button>
  <button class="tb" aria-label="Uusi GeoPackage"><svg><use href="#i-gpkgnew"/></svg></button>
  <button class="tb" aria-label="Uusi Shapefile"><svg><use href="#i-vnew"/></svg></button>
  <button class="tb" aria-label="Uusi SpatiaLite"><svg><use href="#i-feathernew"/></svg></button>
  <button class="tb" aria-label="Uusi muistitaso"><svg><use href="#i-chip"/></svg></button>
  <i class="sep"></i>
  <button class="tb" aria-label="Uusi virtuaalitaso"><svg><use href="#i-vbox"/></svg></button>
  <i class="sep"></i><i class="grip"></i>
  <button class="tb" aria-label="Muokkaukset"><svg><use href="#i-pencils"/></svg></button>
  <button class="tb pressed" aria-label="Muokkaustila"><svg><use href="#i-pencil"/></svg></button>
  <button class="tb" disabled aria-label="Tallenna muutokset"><svg><use href="#i-saveedit"/></svg></button>
  <button class="tb pressed" aria-label="Lisää alue"><svg><use href="#i-addpoly"/></svg></button>
  <button class="tb" aria-label="Solmutyökalu"><svg><use href="#i-nodetool"/></svg></button>
  <button class="dd" aria-label="Lisää"><svg><use href="#i-down"/></svg></button>
  <button class="tb" disabled aria-label="Muokkaa attribuutteja"><svg><use href="#i-multi"/></svg></button>
  <button class="tb" disabled aria-label="Poista"><svg><use href="#i-trash"/></svg></button>
  <button class="tb" disabled aria-label="Leikkaa"><svg><use href="#i-cut"/></svg></button>
  <button class="tb" disabled aria-label="Kopioi"><svg><use href="#i-copy"/></svg></button>
  <button class="tb" disabled aria-label="Liitä"><svg><use href="#i-paste"/></svg></button>
  <button class="tb" disabled aria-label="Kumoa"><svg><use href="#i-undo"/></svg></button>
  <button class="tb" disabled aria-label="Tee uudelleen"><svg><use href="#i-redo"/></svg></button>
  <i class="grip"></i>
  <button class="tb" aria-label="Nimiöt"><svg><use href="#i-abc"/></svg></button>
  <button class="tb" aria-label="Kaaviot"><svg><use href="#i-diagram"/></svg></button>
  <i class="sep"></i>
  <button class="tb" aria-label="Kiinnitetyt nimiöt"><svg><use href="#i-abcblue"/></svg></button>
  <button class="tb" aria-label="Sijoittamattomat nimiöt"><svg><use href="#i-abcred"/></svg></button>
  <i class="sep"></i>
  <button class="tb" disabled aria-label="Kiinnitä nimiö"><svg><use href="#i-abcblue"/></svg></button>
  <button class="tb" disabled aria-label="Näytä nimiö"><svg><use href="#i-abceye"/></svg></button>
  <button class="tb" disabled aria-label="Siirrä nimiötä"><svg><use href="#i-abceye"/></svg></button>
  <button class="tb" disabled aria-label="Kierrä nimiötä"><svg><use href="#i-abceye"/></svg></button>
  <button class="tb" disabled aria-label="Muuta nimiötä"><svg><use href="#i-abceye"/></svg></button>
  <i class="grip"></i>
  <button class="tb" aria-label="Lisäosa"><svg><use href="#i-plug"/></svg></button>
  <button class="tb" aria-label="Metahaku"><svg><use href="#i-globe"/></svg></button>
  <i class="grip"></i>
  <button class="tb" aria-label="Python"><svg><use href="#i-python"/></svg></button>
  <button class="tb" aria-label="Planeetta"><svg><use href="#i-dark"/></svg></button>
  <button class="tb nls">NLS</button>
  <i class="grip"></i>
  <button class="tb" aria-label="Ohje"><svg><use href="#i-help"/></svg></button>
  <i class="grip"></i>
</div>

<div class="toolbar">
  <i class="grip first"></i>
  <button class="tb" aria-label="CAD"><svg><use href="#i-triangle"/></svg></button>
  <button class="tb" aria-label="Siirrä kohde"><svg><use href="#i-move"/></svg></button>
  <button class="dd" aria-label="Lisää"><svg><use href="#i-down"/></svg></button>
  <button class="tb" aria-label="Kierrä"><svg><use href="#i-rotate"/></svg></button>
  <button class="tb" aria-label="Yksinkertaista"><svg><use href="#i-simplify"/></svg></button>
  <button class="tb" aria-label="Lisää rengas"><svg><use href="#i-ring"/></svg></button>
  <button class="tb" aria-label="Lisää osa"><svg><use href="#i-part"/></svg></button>
  <button class="tb" aria-label="Täytä rengas"><svg><use href="#i-fillring"/></svg></button>
  <button class="tb" aria-label="Poista rengas"><svg><use href="#i-delring"/></svg></button>
  <button class="tb" aria-label="Poista osa"><svg><use href="#i-delpart"/></svg></button>
  <button class="tb" aria-label="Muotoile"><svg><use href="#i-reshape"/></svg></button>
  <button class="tb" aria-label="Siirrä käyrää"><svg><use href="#i-offset"/></svg></button>
  <button class="tb" disabled aria-label="Käännä viiva"><svg><use href="#i-vnew"/></svg></button>
  <button class="tb" aria-label="Katkaise/jatka"><svg><use href="#i-trim"/></svg></button>
  <button class="tb" aria-label="Jaa osat"><svg><use href="#i-split"/></svg></button>
  <button class="tb" aria-label="Jaa kohteet"><svg><use href="#i-splitg"/></svg></button>
  <button class="tb" disabled aria-label="Yhdistä"><svg><use href="#i-merge"/></svg></button>
  <button class="tb" disabled aria-label="Yhdistä attribuutit"><svg><use href="#i-mergeattr"/></svg></button>
  <button class="tb" disabled aria-label="Kierrä symboleja"><svg><use href="#i-rotsym"/></svg></button>
  <button class="dd" disabled aria-label="Lisää"><svg><use href="#i-down"/></svg></button>
  <i class="grip"></i>
  <button class="tb pressed" aria-label="Tartunta"><svg><use href="#i-magnet"/></svg></button>
  <button class="tb" aria-label="Tartunta-asetukset"><svg><use href="#i-snapcfg"/></svg></button>
  <button class="tb" aria-label="Näkyvyys"><svg><use href="#i-eye"/></svg></button>
  <button class="tb" aria-label="Topologia"><svg><use href="#i-topo"/></svg></button>
  <button class="tb" aria-label="Päällekkäisyys"><svg><use href="#i-overlap"/></svg></button>
  <button class="tb pressed" aria-label="Tartunta leikkauspisteeseen"><svg><use href="#i-cross"/></svg></button>
  <button class="tb" aria-label="Jäljitys"><svg><use href="#i-trace"/></svg></button>
  <button class="dd" aria-label="Lisää"><svg><use href="#i-down"/></svg></button>
</div>

<div class="toolbar">
  <i class="grip first"></i>
  <button class="tb" aria-label="Kaari"><svg><use href="#i-arc"/></svg></button><button class="dd" aria-label="Lisää"><svg><use href="#i-down"/></svg></button>
  <button class="tb" aria-label="Ympyrä"><svg><use href="#i-circle"/></svg></button><button class="dd" aria-label="Lisää"><svg><use href="#i-down"/></svg></button>
  <button class="tb" aria-label="Ellipsi"><svg><use href="#i-ellipse"/></svg></button><button class="dd" aria-label="Lisää"><svg><use href="#i-down"/></svg></button>
  <button class="tb" aria-label="Suorakulmio"><svg><use href="#i-rect"/></svg></button><button class="dd" aria-label="Lisää"><svg><use href="#i-down"/></svg></button>
  <button class="tb" aria-label="Monikulmio"><svg><use href="#i-polygon"/></svg></button><button class="dd" aria-label="Lisää"><svg><use href="#i-down"/></svg></button>
  <i class="grip"></i>
  <button class="tb" aria-label="Digitransit"><svg><use href="#i-di"/></svg></button>
  <i class="grip"></i>
  <button class="tb" aria-label="Lomake"><svg><use href="#i-form"/></svg></button>
  <button class="tb" aria-label="Tietokantaan"><svg><use href="#i-todb"/></svg></button>
  <button class="tb" aria-label="Tietokannasta"><svg><use href="#i-fromdb"/></svg></button>
  <i class="grip"></i>
  <button class="tb" aria-label="Valitse"><svg><use href="#i-select"/></svg></button><button class="dd" aria-label="Lisää"><svg><use href="#i-down"/></svg></button>
  <button class="tb" aria-label="Valitse arvolla"><svg><use href="#i-selattr"/></svg></button><button class="dd" aria-label="Lisää"><svg><use href="#i-down"/></svg></button>
  <button class="tb" aria-label="Poista valinta"><svg><use href="#i-desel"/></svg></button><button class="dd" aria-label="Lisää"><svg><use href="#i-down"/></svg></button>
</div>

<main class="work">
<aside class="docks">
  <section class="dock">
    <header class="dockhead"><h2>Selain</h2><button aria-label="Irrota"><svg><use href="#i-float"/></svg></button><button aria-label="Sulje"><svg><use href="#i-close"/></svg></button></header>
    <div class="docktools">
      <button aria-label="Lisää taso"><svg><use href="#i-addl"/></svg></button><button aria-label="Päivitä"><svg><use href="#i-refresh"/></svg></button><button aria-label="Suodata"><svg><use href="#i-funnel"/></svg></button><button aria-label="Supista"><svg><use href="#i-collapse"/></svg></button><button aria-label="Tiedot"><svg><use href="#i-info"/></svg></button>
    </div>
    <div class="tree browser">
      <ul>
        <li class="node"><button class="tw" aria-label="Avaa"><svg class="r"><use href="#i-right"/></svg></button><svg class="src"><use href="#i-gpkg"/></svg><span>GeoPackage</span></li>
        <li class="node"><i class="tw"></i><svg class="src"><use href="#i-feather"/></svg><span>SpatiaLite</span></li>
        <li class="node"><button class="tw" aria-label="Avaa"><svg class="r"><use href="#i-right"/></svg></button><svg class="src"><use href="#i-elephant"/></svg><span>PostGIS</span></li>
      </ul>
      <div class="vbar"><button aria-label="Ylös"><svg class="d up"><use href="#i-down"/></svg></button><i class="thumb"></i><button aria-label="Alas"><svg class="d"><use href="#i-down"/></svg></button></div>
      <div class="hbar"><button aria-label="Vasen"><svg class="r left"><use href="#i-right"/></svg></button><i class="thumb"></i><i class="rest"></i><button aria-label="Oikea"><svg class="r"><use href="#i-right"/></svg></button></div>
      <i class="corner"></i>
    </div>
  </section>
  <i class="hsplit"></i>
  <section class="dock grow">
    <header class="dockhead"><h2>Tasot</h2><button aria-label="Irrota"><svg><use href="#i-float"/></svg></button><button aria-label="Sulje"><svg><use href="#i-close"/></svg></button></header>
    <div class="docktools layers">
      <button class="pressed" aria-label="Tyyli"><svg><use href="#i-brush"/></svg></button><button aria-label="Lisää ryhmä"><svg><use href="#i-addgroup"/></svg></button><button aria-label="Teemat"><svg><use href="#i-eye"/></svg></button><button aria-label="Suodata"><svg><use href="#i-funnel"/></svg></button><button aria-label="Lauseke"><svg><use href="#i-eps"/></svg></button><button class="mini" aria-label="Lisää"><svg><use href="#i-down"/></svg></button><button aria-label="Laajenna"><svg><use href="#i-expand"/></svg></button><button aria-label="Supista"><svg><use href="#i-collapse"/></svg></button><button aria-label="Poista"><svg><use href="#i-reml"/></svg></button>
    </div>
    <div class="tree layertree">
      <ul>
        <li class="node"><button class="tw" aria-label="Sulje"><svg class="d"><use href="#i-down"/></svg></button><input type="checkbox" id="l1" checked><svg class="ly"><use href="#i-group"/></svg><label for="l1">Yleiskaava</label></li>
        <li class="node sub"><button class="tw" aria-label="Avaa"><svg class="r"><use href="#i-right"/></svg></button><input type="checkbox" id="l2" checked><svg class="ly"><use href="#i-point"/></svg><label for="l2">Kaavaelementti - piste</label><button class="flt" aria-label="Suodatin"><svg><use href="#i-filter"/></svg></button></li>
        <li class="node sub"><button class="tw" aria-label="Avaa"><svg class="r"><use href="#i-right"/></svg></button><input type="checkbox" id="l3" checked><svg class="ly"><use href="#i-line"/></svg><label for="l3">Kaavaelementti - viiva</label><button class="flt" aria-label="Suodatin"><svg><use href="#i-filter"/></svg></button></li>
        <li class="node sub"><button class="tw" aria-label="Avaa"><svg class="r"><use href="#i-right"/></svg></button><input type="checkbox" id="l4" checked><svg class="ly"><use href="#i-poly"/></svg><label for="l4">Kaavaelementti - osa-alue</label><button class="flt" aria-label="Suodatin"><svg><use href="#i-filter"/></svg></button></li>
        <li class="node sub"><button class="tw" aria-label="Avaa"><svg class="r"><use href="#i-right"/></svg></button><input type="checkbox" id="l5" checked><svg class="ly"><use href="#i-poly"/></svg><label for="l5">Maankäyttöalue</label></li>
        <li class="node sub current"><i class="tw"></i><input type="checkbox" id="l6" checked><svg class="ly"><use href="#i-polysel"/></svg><label for="l6">Yleiskaava</label></li>
        <li class="node"><button class="tw" aria-label="Sulje"><svg class="d"><use href="#i-down"/></svg></button><input type="checkbox" id="l7"><svg class="ly"><use href="#i-group"/></svg><label for="l7">Kaavan lisätiedot</label></li>
        <li class="node tab"><svg class="ly"><use href="#i-tbl"/></svg><span>Dokumentti</span></li>
        <li class="node tab"><svg class="ly"><use href="#i-tbl"/></svg><span>Numeerinen lisätieto</span></li>
        <li class="node tab"><svg class="ly"><use href="#i-tbl"/></svg><span>Teema</span></li>
        <li class="node tab"><svg class="ly"><use href="#i-tbl"/></svg><span>Taustakartta</span></li>
        <li class="node tab"><svg class="ly"><use href="#i-tbl"/></svg><span>Kaavamääräys</span></li>
        <li class="node"><i class="tw"></i><input type="checkbox" id="l8" aria-label="Ryhmä"><svg class="ly"><use href="#i-group"/></svg></li>
      </ul>
      <div class="vbar"><button aria-label="Ylös"><svg class="d up"><use href="#i-down"/></svg></button><i class="thumb"></i></div>
    </div>
  </section>
</aside>
<i class="vsplit"></i>
<div class="map">
<svg role="img" aria-label="Kartta">
<defs>
<pattern id="trees" width="148" height="116" patternUnits="userSpaceOnUse"><g fill="none" stroke="#86ab7c" stroke-width="2.500"><path d="M22 20a6 6 0 1 1-1 8h12M27 30v9M40 18a6 7 0 1 0 1 12M43 30v9M96 78a6 6 0 1 1-1 8h12M101 88v9M114 76a6 7 0 1 0 1 12M117 88v9"/></g></pattern>
<pattern id="paths" width="190" height="170" patternUnits="userSpaceOnUse"><g fill="none" stroke="#f0957f" stroke-width="1.800" stroke-dasharray="5 4" opacity=".8"><path d="M0 30q50 40 90 10t100-10M60 0q-20 50 20 90t-20 80M0 120q60-30 100 0t90 0M150 0q30 60-10 100t10 70"/></g></pattern>
<pattern id="marsh" width="36" height="34" patternUnits="userSpaceOnUse"><path d="M3 7h15M20 17h13M5 27h16" stroke="#64b4e4" stroke-width="2.500"/></pattern>
<pattern id="scree" width="16" height="14" patternUnits="userSpaceOnUse"><path d="M3 4l3-2 2 3zM10 10l3-2 1 4" fill="none" stroke="#e89a90" stroke-width="1.500"/></pattern>
<pattern id="houses" width="34" height="30" patternUnits="userSpaceOnUse" patternTransform="rotate(-18)"><path d="M4 4h17v8H4zM24 15h7v12h-7zM6 20h10v6H6z" fill="#cdbab2"/></pattern>
<pattern id="blocks" width="104" height="92" patternUnits="userSpaceOnUse" patternTransform="rotate(-18)"><path d="M8 10h36v11H8zM60 8h11v30H60zM84 14h12v20H84zM10 44h10v30H10zM36 54h34v11H36zM82 56h11v26H82z" fill="#d4a9a9"/></pattern>
<path id="r1" d="M500 66L410 104Q330 160 345 190L410 225Q450 210 450 110"/>
<path id="r2" d="M545 45q40-30 70 20t-20 55q-50 0-50-75zM620 18q10 100 60 105t60-40q60 0 65-65"/>
<path id="r3" d="M650 205q120 10 155-50 90-20 90 35 30 70-60 25M690 290q60 40 80 0t90-40M560 190h90"/>
<path id="r4" d="M725 375q-50 70-170 45-70-60-40-120l50 0M600 370q70-5 90 30M725 375l70 8 25-60 65-52 30-60"/>
<path id="r5" d="M840 85q80 20 110 60M1060 150q-20-80 30-110M975 120l20 50M650 25l60 30 60-35"/>
<path id="h1" d="M490 18Q520 180 560 245T725 375L795 383Q800 320 885 268L1010 200 1145 133M680 18Q730 140 885 268"/>
</defs>
<g transform="translate(-4 -5) scale(.3333)">
<path fill="#add19e" d="M0 0h1400v1700H0z"/>
<path fill="url(#paths)" d="M0 0h1400v1700H0z"/>
<path fill="url(#trees)" d="M0 0h1400v1700H0z"/>
<path fill="#aad3df" d="M0 590Q40 680 80 715L155 775 145 840Q170 890 205 895L235 860 215 830Q240 815 280 830T390 855 500 825L525 850 525 880Q480 910 460 960L475 1020 470 1045 440 1050Q360 1045 330 1060L270 1110 190 1155Q170 1180 195 1210L195 1240 165 1280 140 1255 85 1240 95 1290 60 1345 20 1340 0 1300z"/>
<path fill="#add19e" d="M0 795L50 800Q110 805 118 840L50 850 40 880Q20 930 0 930z"/><path fill="#f2efe9" d="M42 825l45-5-5 25-35 5z"/>
<path d="M170 1270l60 50 70 85" fill="none" stroke="#aad3df" stroke-width="18"/>
<path fill="#aad3df" d="M285 1400L320 1390 395 1400Q385 1440 372 1480L380 1530 430 1590Q500 1590 520 1640L540 1700H480L430 1640 340 1530 285 1440z"/>
<path fill="#dedede" d="M150 780Q200 745 250 755L380 745Q500 740 560 775L590 780 590 820 555 840 545 900 500 1040 470 1045 475 1010 460 960Q480 900 520 880L525 850 500 825Q450 850 390 855T280 830L220 830 235 865 205 897Q170 890 145 840z"/>
<path fill="#f2efe9" d="M180 765q100-40 180-20 100-20 160 5l50 35-50 5q-60-30-130-20-90-20-195 5z"/>
<path fill="#e892a2" d="M15 145L185 18h80L60 165 15 195z"/><path fill="none" stroke="#dc5f82" stroke-width="3" d="M50 150L205 18M60 170L265 18"/><path fill="#f4b6cc" d="M15 150l40-22 5 42-45 25z"/>
<g fill="#efdcd2" stroke="#dcc8bd"><path d="M345 30q80-20 80 20-40 50-90 60-20-60 10-80zM130 115q60 10 95 110l-30 10q-70-50-65-120zM590 235q70 0 90 45-50 0-90-45zM905 275q60-25 80 10-40 40-80-10zM450 380q60-20 75 30-40 50-70-5zM405 420q30-5 35 15-15 25-35-15zM1080 350q60 0 70 45-40 0-70-45zM965 350q60-20 120 10-60-10-120 5zM1095 440q80-30 125 15-80-25-120 0zM940 440q30-15 35 10-20 20-35-10zM1005 405q30-5 30 25-25 0-30-25zM15 290q30 0 45 40l-40-10z"/></g>
<path fill="url(#scree)" d="M345 30q80-20 80 20-40 50-90 60-20-60 10-80zM130 115q60 10 95 110l-30 10q-70-50-65-120zM590 235q70 0 90 45-50 0-90-45zM905 275q60-25 80 10-40 40-80-10zM450 380q60-20 75 30-40 50-70-5zM1080 350q60 0 70 45-40 0-70-45z"/>
<path fill="#7fb873" d="M240 190Q300 190 350 240 430 255 468 250 470 300 430 320L425 395Q365 415 338 385L350 300Q290 280 270 240 240 220 240 190z"/><path fill="#cdd497" d="M252 205Q300 205 345 250 410 275 455 262L425 315 415 385Q375 395 352 378L365 290Q310 270 285 240 255 225 252 205z"/><path fill="url(#marsh)" d="M252 205Q300 205 345 250 410 275 455 262L425 315 415 385Q375 395 352 378L365 290Q310 270 285 240 255 225 252 205z"/>
<path d="M411 270l-6 30-16 45 25 38" fill="none" stroke="#6a5a50" stroke-width="8"/><path d="M411 270l-6 30-16 45 25 38" fill="none" stroke="#fff" stroke-width="4" stroke-dasharray="10 3"/>
<path d="M415 380Q445 440 458 480T510 530" fill="none" stroke="#aad3df" stroke-width="9"/>
<g fill="#d4d590"><path d="M65 420l90 10 25 50-70 8zM240 120h70l-20 20h-50zM1145 250l40 5-15 15z"/></g>
<g fill="#cdebb0"><path d="M250 545Q290 595 380 590L360 680 300 660 275 625zM820 585l60 5 10 50-50 5zM915 150l70 60-70-10zM745 430l60-5-15 25zM940 585l150-35 60-30-10 60-180 35zM890 30l40 0-10 18z"/></g>
<path fill="url(#marsh)" d="M65 420l90 10 25 50-70 8zM270 600h110l-20 80-60-20zM820 585l60 5 10 50-50 5zM915 150l70 60-70-10zM745 430l60-5-15 25zM940 590l160-30 0 20-100 30z"/>
<g fill="#c8facc"><path d="M480 170l10 40 70 20-5 55-40-10-20-35-30-15zM620 160q50-10 100 10l-5 10-95-5z"/></g>
<path fill="none" stroke="#c9cd9c" stroke-width="30" d="M0 510l650 35 620 30"/><path fill="none" stroke="#8a8a80" stroke-width="1.500" d="M0 515l650 30 620 35M0 522l650 32 620 36"/><path d="M50 515h10M185 522h10M325 530h10M465 538h10M605 548h10M770 555h10M900 562h10M1065 572h10M1215 578h10" stroke="#777" stroke-width="9"/>
<g fill="none" stroke-linejoin="round"><g stroke="#e0dfdf" stroke-width="66"><use href="#r1"/><use href="#r2"/><use href="#r3"/><use href="#r4"/><use href="#r5"/></g><g stroke="#cfc0b8" stroke-width="42" stroke-dasharray="9 8"><use href="#r1"/><use href="#r2"/><use href="#r3"/><use href="#r4"/><use href="#r5"/></g><g stroke="#e0dfdf" stroke-width="22"><use href="#r1"/><use href="#r2"/><use href="#r3"/><use href="#r4"/><use href="#r5"/></g><g stroke="#fff" stroke-width="5"><use href="#r1"/><use href="#r2"/><use href="#r3"/><use href="#r4"/></g><use href="#h1" stroke="#fff" stroke-width="9"/></g>
<path fill="#ffffb8" d="M1070 175l55-25 25 55-40 55-20-5z"/><path fill="#cbb8ae" d="M1090 180l30-15 5 40-35 10z"/><path fill="#aadfcb" d="M1035 215l30-10 10 40-25 10z"/>
<path fill="none" stroke="#ffaf98" stroke-width="27" d="M1205 18q10 100 50 270"/><path fill="none" stroke="#444" stroke-width="7" d="M1170 18q40 60 45 150t35 320"/><path fill="none" stroke="#fff" stroke-width="9" d="M1150 130q0 40 50 30"/>
<path fill="#f2efe9" d="M1135 605l120-10v40l-85 5zM785 395l40-5 15 20-40 15z"/>
<g fill="none" stroke="#5a5ae0" stroke-width="4" stroke-dasharray="4 6"><use href="#h1"/><path d="M15 505l230 15 200 20 120 0 110 25 120-50 15-30-5-100M245 520q70 70 200 20M670 570l20 100q-50 60-50 200M690 675q80-25 200-12t110-45 150-40l0-50 95-45M340 180l150-25 70 90-10 50 50 60 50-50M975 50v70l40 60M975 98h80M1070 190q-10 130 100 140t70 20"/></g>
<path fill="none" stroke="#f2e6c8" stroke-width="4" stroke-dasharray="12 5" d="M850 420q10 60-50 80T690 670 540 800M15 400l80 5 30-150-15-140"/>
<path fill="#dfdede" d="M675 805l30 90 15-70 530-185-60-5-100 40-90 10-70 40-200 60z"/><path fill="url(#houses)" d="M690 800l30 20 480-165-20-8-420 140z"/>
<path fill="#e3bfc0" d="M715 825L1260 632V1700H1058L998 1580 725 1197z"/>
<path fill="url(#blocks)" d="M715 825L1260 632V1700H1058L998 1580 725 1197z"/>
<path fill="#b3b382" d="M716 870l120-20 110 20-5 90-100-20-50 20-78 0zM780 1200l90 30 80 50-10 50-90-20-60-60zM1125 1255l130-30v80q-70 5-120-20zM1000 1590l110-45 60 155h-90l-60-80zM1190 1370l60-10v90q-60-10-50-40zM722 1020l20 60 90 70-20 40-85-15zM925 1370l20-10 60 130-20 10z"/>
<g fill="#ffdfb5"><path d="M955 820l140-50 20 55-165 75zM930 1150l120-35 30 70-120 45z"/></g>
<g fill="#cfa59b"><path d="M1005 820l60-15 5 25-60 15zM985 1160l20-5 10 30-20 5zM1010 1150l20-5 10 30-20 5zM1035 1140l15-5 8 25-15 5z"/></g>
<g fill="#c8dca0"><path d="M1125 780l70-50 20 60-90 30zM835 1010l45-10 10 60-45 15zM1090 920l60-20 15 60-40 20zM1090 1160l90-30 15 80-70 30zM905 1300l100-25 20 40-90 50zM1055 1380l100-40 40 130-60 10-15-80-60 10zM1210 750l40 0v130l-30-20z"/></g>
<g fill="#aecbb0"><path d="M815 870l105-25 10 40-90 20zM1000 1230l75-25 10 35-75 30zM950 1165l25-10 15 45-20 10zM1100 1360l35-10 15 40-40 20zM1120 1410l40-10 25 60-35 15zM1130 795l35-10 8 20-35 10z"/></g>
<path fill="#a8b3b8" d="M1160 1345q40-50 95-40v65q-70 30-95-25z"/>
<path fill="#dedede" d="M590 1205L700 1155 725 1200 998 1575 885 1625 850 1615 835 1570 850 1520 790 1510 790 1550 710 1575 650 1430 680 1400 730 1380 715 1330 640 1320 605 1270z"/><path fill="url(#houses)" d="M600 1210L695 1165 725 1205 960 1540 880 1600 850 1560 855 1510 790 1500 720 1550 670 1430 740 1380 715 1320 650 1310z"/>
<path fill="#c8facc" d="M735 1300l40-10-20 40zM740 1415l20-5-5 25z"/><path fill="#f2efe9" d="M470 1320q10-40 40-90l30 20 30 10-15 45-40 0-40 45zM590 1170l30-35 15 0-20 30zM650 1140l40-10-10 20zM285 1110l20-30 20 20z"/>
<g fill="none" stroke="#fde4e4" stroke-width="11"><path d="M730 1210l110-45 230-95 180-55M1000 1575l250-100M780 1195l85 60 50 130 90 190M1030 1310l-120 60M1040 1300l215-90"/></g><g fill="none" stroke="#fbdcdc" stroke-width="6"><path d="M945 780l0 125 75 175M780 1035l50 120M780 1035l35-10M920 985l120-45 20 50-115 50zM1160 890l70-35 30 60-70 30zM755 845l200-60M1115 1540l50 110M970 970l30 70"/></g>
<g fill="none" stroke="#fff" stroke-width="7"><path d="M640 1250l90-35M605 1220q0 40 35 30M640 1190l15 50M690 1175l40 115M715 1460l180-70M715 1460l30 60M830 1400l30 60M860 1570q20 60 60 35l80-35M890 1540l25 70M930 1530l20 40"/></g>
<g fill="none" stroke="#5050d8" stroke-width="4" stroke-dasharray="4 6"><path d="M640 880q40 110 0 140-10 60-20 120-70 80-30 160l35 50v90l80 180 110 40 80 40M660 900l70-10 100 50 220-60 200-90M950 900l40 100 40 80 20 80M850 950l40 110M700 1010l50 30h100l70-40M1050 930q50 50 70 80l60 150M1120 800l40 90 90 140M660 1240l70 170 30 50M635 1350h100M660 1480l280-110 310-120M710 1590l90-30 0-40 50 0 110-50 90-20M1045 1350q20 90 60 180l60 130M960 760l160-55 130-80M940 1230q50 60 100 40l90-50"/></g>
<g fill="none" stroke="#f0e8d4" stroke-width="5"><path d="M660 970q40 130 110 190M0 1340l50 70 50 105 60-5 80 60 90 110M270 1330q160-20 250 60 100 40 160 170M130 1320q60 40 130 20"/></g>
<path fill="none" stroke="#e0d8b8" stroke-width="4" stroke-dasharray="12 5" d="M320 1105h130l100-15 130 10 120 90M540 1090l10-60 110-10M130 1320l30 190"/>
<path fill="none" stroke="#8890c8" stroke-width="2" stroke-dasharray="6 6" d="M470 830L100 1050 85 1200l120 80M300 1400l120 130 110 150"/>
<path fill="none" stroke="#f02020" stroke-width="4" d="M1260 632L715 825 725 1197 960 1500 1060 1690"/>
<path fill="#c4c0b0" d="M0 1520l40 10 10 70 50 20-10 60-60 0-30-60z"/>
</g>
<g class="maptext"><text x="229" y="40" font-size="13" fill="#777">Hallila</text><text transform="translate(28 36) rotate(-36)" font-size="10" fill="#222">Tampereen itä</text><text x="0" y="79" font-size="9" fill="#7a6a5c">nvuori</text><text x="0" y="90" font-size="9" fill="#7a6a5c">/ m</text><text transform="translate(348 5) rotate(45)" font-size="9" fill="#222">Yosuonkatu</text><text x="124" y="296" font-size="11" font-style="italic" fill="#6a8fc0">Lukonlahti</text><text transform="translate(60 430) rotate(44)" font-size="12" font-style="italic" fill="#4f7fae">Suolijoja</text><text x="0" y="429" font-size="10" fill="#222">okka</text><text transform="translate(358 353) rotate(-23)" font-size="10" fill="#222">Opiskelijankatu</text><text transform="translate(384 497) rotate(-20)" font-size="10" fill="#222">Teekkarinkatu</text><text x="392" y="443" font-size="9" font-style="italic" font-weight="700" fill="#3f7a4f">Ahvenisjärvi</text><text transform="translate(333 537) rotate(56)" font-size="9" fill="#222">Rinne</text></g>
</svg>
</div>
</main>
</div>

<section class="dialog" role="dialog" aria-labelledby="dt">
  <header class="dlghead"><h2 id="dt">Yleiskaava - Kohteen attribuutit</h2><button aria-label="Sulje"><svg width="10" height="8"><path d="M1 0l8 8M9 0L1 8" stroke="#f4f4f4" stroke-width="2"/></svg></button></header>
  <div class="dlgbody">
    <div class="tabs" role="tablist"><button role="tab" class="sel" aria-selected="true">Perustiedot yleiskaavasta</button><button role="tab">Kaavamääräys</button><button role="tab">Teema</button><button role="tab">Lisätiedot</button><button role="tab">Kaavaelementit</button></div>
    <div class="pane">
      <div class="scroll">
        <fieldset class="group main">
          <legend>Syötä kaavan perustiedot</legend>
          <div class="fields">
            <label for="f1">Kaavan nimi</label><div class="ctl"><input id="f1" value="NULL"></div>
            <label for="f2">Kaavatunnus</label><div class="ctl"><input id="f2" placeholder="NULL" class="it"></div>
            <label for="f3">Kieli</label><div class="ctl combo"><div class="box"><select id="f3" class="it"><option>Suomi</option></select><svg class="clr"><use href="#i-clear"/></svg><svg class="arr"><use href="#i-down"/></svg></div><button aria-label="Lomake"><svg><use href="#i-formview"/></svg></button><button aria-label="Lisää"><svg><use href="#i-plus"/></svg></button></div>
            <label for="f4">Kaavoitusvaihe</label><div class="ctl combo"><div class="box"><select id="f4" class="bd"><option>aloitusvaihe</option></select><svg class="clr"><use href="#i-clear"/></svg><svg class="arr"><use href="#i-down"/></svg></div><button aria-label="Lomake"><svg><use href="#i-formview"/></svg></button><button aria-label="Lisää"><svg><use href="#i-plus"/></svg></button></div>
            <label for="f5">Kaavatyyppi</label><div class="ctl combo"><div class="box"><select id="f5" class="it"><option>yleiskaava</option></select><svg class="clr"><use href="#i-clear"/></svg><svg class="arr"><use href="#i-down"/></svg></div><button aria-label="Lomake"><svg><use href="#i-formview"/></svg></button><button aria-label="Lisää"><svg><use href="#i-plus"/></svg></button></div>
            <label for="f6">Vahvistajan tiedot</label><div class="ctl"><input id="f6" placeholder="NULL" class="it"></div>
            <label for="f7">Taustakartta</label><div class="ctl combo"><div class="box"><select id="f7"><option></option></select><svg class="clr"><use href="#i-clear"/></svg><svg class="arr"><use href="#i-down"/></svg></div><button disabled aria-label="Lomake"><svg><use href="#i-formview"/></svg></button><button aria-label="Lisää"><svg><use href="#i-plus"/></svg></button></div>
            <label for="f8">Viimeisin muokkaaja</label><div class="ctl"><div class="box"><input id="f8" value="sanna_gispo"><svg class="clr end"><use href="#i-clear"/></svg></div></div>
          </div>
        </fieldset>
        <fieldset class="group dates">
          <legend>Päiväykset</legend>
          <div class="fields">
            <label for="d1">Luomispäivämäärä</label><input id="d1" value="2020-09-22 1">
            <label for="d2">Voimaantulopäivämäärä</label><input id="d2" placeholder="NULL">
            <label for="d3">Kumoamispäivämäärä</label><input id="d3" placeholder="NULL">
            <label for="d4">Poistamispäivämäärä</label><input id="d4" placeholder="NULL">
            <i class="blank"></i>
          </div>
        </fieldset>
      </div>
      <div class="dlgbar"><button aria-label="Vasen"><svg class="r left"><use href="#i-right"/></svg></button><i></i><button class="next" aria-label="Oikea"><svg class="r"><use href="#i-right"/></svg></button></div>
    </div>
    <footer class="actions"><button>OK</button><button>Peru</button></footer>
  </div>
</section>
</body>
</html>
```
FILE: styles.css
```
* { box-sizing: border-box; }
body { margin: 0; background: #efefef; color: #000; font-family: "Open Sans", "Noto Sans", sans-serif; font-size: 17px; overflow: hidden; }
button { font: inherit; color: inherit; padding: 0; border: 0; background: none; }
h1, h2 { margin: 0; font-weight: 400; }
ul { margin: 0; padding: 0; list-style: none; }
.sprite { display: none; }
svg { display: block; flex: none; }
.app { display: flex; flex-direction: column; height: 100vh; overflow: hidden; }

.titlebar { display: flex; align-items: center; height: 33px; flex: none; background: #fff; padding-right: 51px; }
.logo { width: 22px; height: 24px; margin-right: 5px; }
.titlebar h1 { flex: 1; font-size: 17px; }
.winbtn { width: 16px; height: 16px; margin-left: 53px; }
.menubar { display: flex; height: 30px; flex: none; gap: 16px; padding: 0 8px; align-items: center; border-bottom: 1px solid #d6d6d6; }
.menubar u { text-underline-offset: 3px; text-decoration-thickness: 1px; }

.toolbar { display: flex; align-items: center; height: 43px; flex: none; background: linear-gradient(#fafafa, #eee); border-bottom: 1px solid #b6b6b6; }
.tb { width: 33px; height: 32px; flex: none; display: grid; place-items: center; border: 1px solid transparent; border-radius: 3px; }
.tb svg { width: 24px; height: 24px; }
.tb.raised { background: #fff; border-color: #b9b9b9; }
.tb.pressed { background: #dcdcdc; border-color: #a9a9a9; }
.tb:disabled svg, .dd:disabled svg { opacity: .3; filter: grayscale(.8); }
.nls { font-size: 12px; font-weight: 700; color: #4fa0b0; }
.dd { width: 18px; height: 32px; flex: none; display: grid; place-items: center; }
.dd svg, .arr, .mini svg { width: 12px; height: 7px; fill: #4c4c4c; }
.grip { width: 24px; height: 18px; flex: none; background: repeating-linear-gradient(#b4b4b4 0 1px, transparent 1px 3px) 14px 0 / 1px 18px no-repeat, repeating-linear-gradient(#b4b4b4 0 1px, transparent 1px 3px) 17px 0 / 1px 18px no-repeat; }
.grip.first { width: 13px; background-position: 4px 0, 7px 0; }
.sep { width: 10px; height: 20px; flex: none; background: linear-gradient(#ccc, #ccc) 5px 0 / 1px 100% no-repeat; }

.work { flex: 1; display: flex; min-height: 0; }
.docks { width: 500px; flex: none; display: flex; flex-direction: column; padding-top: 1px; }
.dock.grow { flex: 1; display: flex; flex-direction: column; min-height: 0; }
.dockhead { display: flex; align-items: center; height: 22px; gap: 3px; padding-right: 1px; }
.dockhead h2 { flex: 1; font-size: 17px; line-height: 22px; }
.dockhead svg { width: 12px; height: 12px; }
.docktools { display: flex; align-items: center; height: 32px; padding-left: 1px; gap: 1px; }
.docktools.layers { height: 34px; padding-bottom: 2px; }
.docktools button { width: 24px; height: 24px; display: grid; place-items: center; border-radius: 3px; }
.docktools svg { width: 16px; height: 16px; }
.docktools .pressed { background: #dcdcdc; border: 1px solid #a9a9a9; }
.docktools .mini { width: 19px; }
.docktools .mini svg { width: 12px; height: 7px; }
.tree { background: #fff; border: 1px solid #b6b6b6; border-left: 0; display: grid; grid-template-columns: 1fr 21px; min-height: 0; overflow: hidden; }
.browser { grid-template-rows: 82px 20px; }
.layertree { flex: 1; border-bottom: 0; }
.tree ul { overflow: hidden; min-height: 0; }
.node { display: flex; align-items: center; height: 27px; line-height: 25px; }
.tw { width: 22px; height: 20px; display: grid; place-items: center; flex: none; }
svg.r { width: 7px; height: 12px; fill: #5c5c5c; }
svg.d { width: 12px; height: 7px; fill: #5c5c5c; }
.left { transform: scaleX(-1); }
.up { transform: scaleY(-1); }
.src { width: 24px; height: 24px; margin: 0 6px 0 7px; }
.ly { width: 20px; height: 20px; margin: 0 9px 0 8px; }
.node input { appearance: none; width: 21px; height: 21px; margin: 0 0 0 7px; flex: none; border: 1px solid #b6b6b6; background: #fff; display: grid; place-items: center; }
.node input:checked::before { content: ""; width: 15px; height: 15px; background: #000; clip-path: polygon(0 50%, 15% 42%, 37% 72%, 82% 0, 100% 0, 42% 100%, 30% 100%); }
.sub { padding-left: 30px; font-weight: 700; }
.sub .ly { margin: 0 6px; }
.tab { padding-left: 59px; font-weight: 700; }
.tab .ly { margin: 0 7px 0 0; }
.current { background: #efefef; }
.current label { text-decoration: underline; }
.flt { margin: 0 10px 0 auto; width: 24px; height: 24px; display: grid; place-items: center; border: 1px solid #e2e2e2; border-radius: 3px; background: #f8f8f8; }
.flt svg { width: 18px; height: 18px; }
.vbar { border-left: 1px solid #b6b6b6; display: flex; flex-direction: column; background: #fbfbfb; }
.vbar button { height: 20px; display: grid; place-items: center; }
.vbar .thumb { flex: 1; border: solid #b6b6b6; border-width: 1px 0; background: #f4f4f4; }
.layertree .thumb { border-bottom: 0; background: #f8f8f8; }
.hbar { border-top: 1px solid #b6b6b6; display: flex; background: linear-gradient(#fff, #f0f0f0); }
.hbar button { width: 16px; display: grid; place-items: center; }
.hbar button:last-child { width: 20px; }
.hbar .thumb { flex: 1; border: solid #b6b6b6; border-width: 0 1px; }
.hbar .rest { width: 11px; background: #e4e4e4; border-right: 1px solid #b6b6b6; }
.corner { border: solid #b6b6b6; border-width: 1px 0 0 1px; background: #efefef; }
.hsplit { height: 10px; flex: none; background: repeating-linear-gradient(90deg, #b0b0b0 0 1px, transparent 1px 3px) 50% 50% / 17px 1px no-repeat; }
.vsplit { width: 9px; flex: none; background: repeating-linear-gradient(#b0b0b0 0 1px, transparent 1px 3px) 5px 50% / 1px 17px no-repeat; }
.map { flex: 1; min-width: 0; border: solid #b6b6b6; border-width: 1px 0 0 1px; background: #add19e; }
.map svg { width: 100%; height: 100%; }
.maptext { font-family: "Open Sans", sans-serif; paint-order: stroke; stroke: #fff; stroke-opacity: .5; stroke-width: 1px; }

.dialog { position: absolute; left: 923px; right: 2px; top: 131px; bottom: 0; display: flex; flex-direction: column; background: #efefef; font-family: "DejaVu Sans Condensed", "DejaVu Sans", sans-serif; font-size: 15px; box-shadow: 0 0 14px 3px rgba(0, 0, 0, .3); }
.dlghead { height: 44px; flex: none; background: #fff; display: flex; align-items: center; padding: 0 1px 0 11px; font-family: "Open Sans", sans-serif; color: #999; }
.dlghead h2 { flex: 1; font-size: 17px; }
.dlghead button { width: 30px; height: 30px; margin-top: 7px; background: #e4e4e4; display: grid; place-items: center; }
.dlgbody { flex: 1; display: flex; flex-direction: column; padding: 13px 13px 11px; min-height: 0; }
.tabs { display: flex; align-items: flex-end; height: 35px; flex: none; }
.tabs button { height: 33px; padding: 0 18px; border: 1px solid #b6b6b6; border-width: 1px 1px 0 0; border-radius: 3px 3px 0 0; background: #e9e9e9; white-space: nowrap; }
.tabs .sel { height: 36px; margin-bottom: -1px; border-width: 1px 1px 0; background: #fefefe; position: relative; border-color: #a6a6a6; }
.pane { flex: 1; display: flex; flex-direction: column; border: 1px solid #a6a6a6; background: #fdfdfd; padding: 14px 14px 12px; min-height: 0; }
.scroll { flex: 1; display: flex; align-items: flex-start; gap: 10px; overflow: hidden; background: #fff; padding: 14px 0 0 14px; }
.group { flex: none; margin: 0; padding: 0; border: 0; }
.group legend { padding: 0; font-weight: 700; height: 23px; line-height: 22px; font-size: 16px; }
.main { width: 569px; }
.dates { width: 520px; }
.fields { display: grid; align-items: center; height: 335px; align-content: start; border: 1px solid #dedede; border-radius: 2px; background: #fbfbfb; padding: 14px; gap: 9px; }
.main .fields { grid-template-columns: 146px 1fr; }
.dates .fields { grid-template-columns: 170px 1fr; }
.fields label { background: #fff; align-self: stretch; display: flex; align-items: center; white-space: nowrap; }
.ctl { background: #fff; padding-right: 16px; display: flex; gap: 2px; }
.fields input, .fields select { appearance: none; width: 100%; height: 27px; margin: 0; padding: 0 2px; border: 1px solid #b0b0b0; border-radius: 3px; background: #fff; font: inherit; font-size: 16px; color: #000; }
.fields input::placeholder { color: #888; opacity: 1; }
.dates .fields input { height: 29px; padding: 0 3px; }
.fields .it { font-style: italic; }
.fields select { color: #999; }
.fields .bd { font-weight: 700; }
.combo { align-items: center; height: 31px; }
.combo button { width: 32px; height: 31px; flex: none; display: grid; place-items: center; border: 1px solid #b0b0b0; border-radius: 3px; background: linear-gradient(#fff, #f6f6f6); }
.combo button:disabled { border-color: #ddd; }
.combo button:disabled svg { opacity: .35; }
.combo svg { width: 22px; height: 22px; }
.box { position: relative; flex: 1; display: flex; }
.box .clr { position: absolute; right: 39px; top: 7px; width: 13px; height: 12px; }
.box .clr.end { right: 9px; }
.box .arr { position: absolute; right: 11px; top: 10px; width: 12px; height: 7px; }
.blank { background: #fff; height: 152px; }
.dlgbar { height: 21px; flex: none; display: flex; background: #fefefe; }
.dlgbar button { width: 21px; display: grid; place-items: center; border-right: 1px solid #777; }
.dlgbar i { width: 622px; border: solid #777; border-width: 0 2px 2px 0; }
.dlgbar .next { margin-left: auto; border: solid #777; border-width: 0 2px 2px 0; }
.actions { display: flex; justify-content: flex-end; gap: 9px; padding-top: 11px; }
.actions button { width: 80px; height: 30px; border: 1px solid #a6a6a6; border-radius: 3px; background: linear-gradient(#fff, #ececec); }
```
